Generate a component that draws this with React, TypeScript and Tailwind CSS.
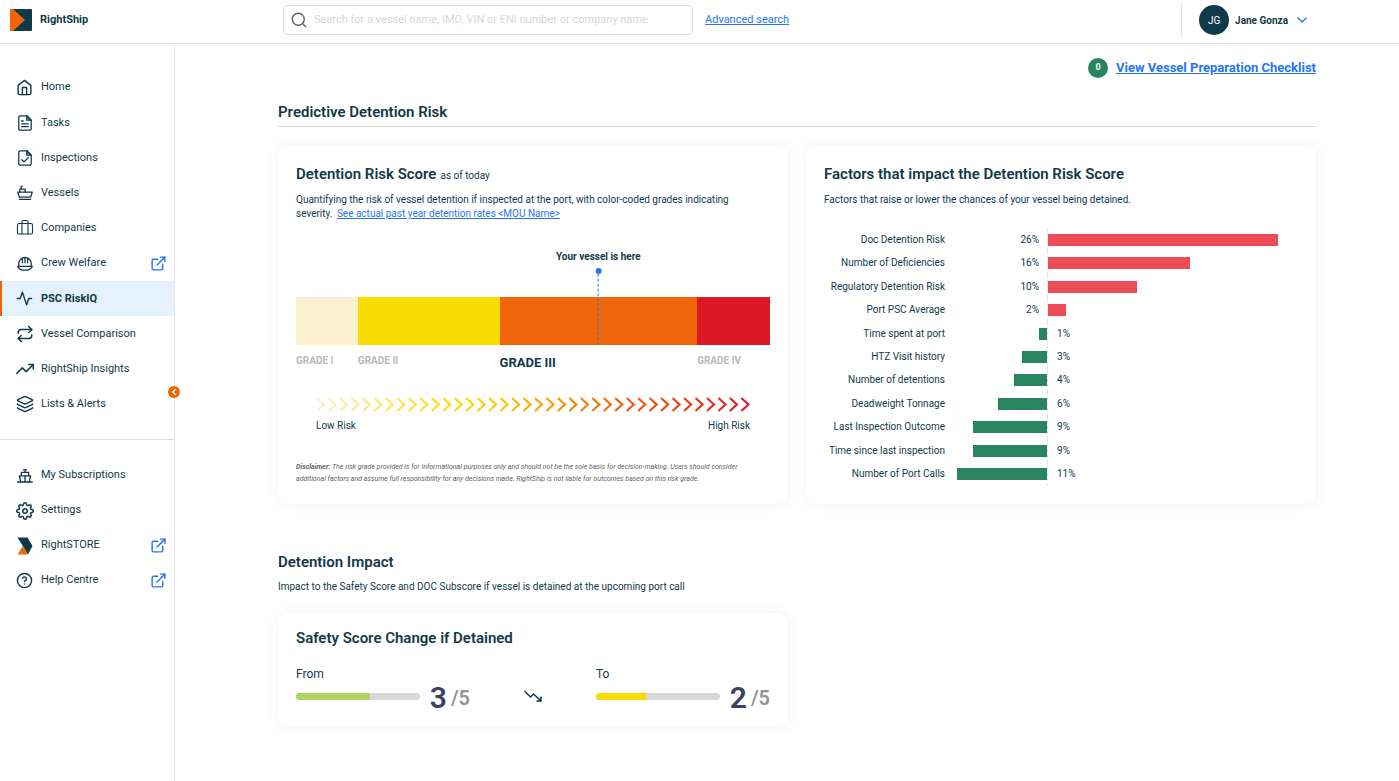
import type { ReactNode } from 'react';
import clsx from 'clsx';
import { Briefcase, ChevronDown, ChevronLeft, Layers, Repeat, Search } from 'lucide-react';
import { FiActivity, FiExternalLink, FiHelpCircle, FiHome, FiSettings, FiTrendingUp } from 'react-icons/fi';

interface NavItem {
  label: string;
  icon: ReactNode;
  external?: boolean;
  active?: boolean;
}

interface Factor {
  label: string;
  value: number;
  raisesRisk: boolean;
}

function LineIcon({ children }: { children: ReactNode }) {
  return (
    <svg
      viewBox="0 0 16 16"
      className="size-4"
      fill="none"
      stroke="currentColor"
      strokeWidth="1.3"
      strokeLinecap="round"
      strokeLinejoin="round"
      aria-hidden="true"
    >
      {children}
    </svg>
  );
}

function TasksIcon() {
  return (
    <LineIcon>
      <path d="M9.8.8H3.2a1.4 1.4 0 0 0-1.4 1.4v11.6a1.4 1.4 0 0 0 1.4 1.4h9.6a1.4 1.4 0 0 0 1.4-1.4V5.2z" />
      <path d="M9.8.8v4.4h4.4z" fill="currentColor" fillOpacity="0.35" />
      <path d="M4.6 6h1.6M4.6 8.8h6.8M4.6 11.6h6.8" />
    </LineIcon>
  );
}

function InspectionsIcon() {
  return (
    <LineIcon>
      <path d="M9.8.8H3.2a1.4 1.4 0 0 0-1.4 1.4v11.6a1.4 1.4 0 0 0 1.4 1.4h9.6a1.4 1.4 0 0 0 1.4-1.4V5.2z" />
      <path d="M9.8.8v4.4h4.4z" fill="currentColor" fillOpacity="0.35" />
      <path d="m4.9 9.8 2.1 2.1 4.2-4.2" />
    </LineIcon>
  );
}

function VesselIcon() {
  return (
    <LineIcon>
      <path d="M.8 7.2h14.4l-1.6 5H2.4z" />
      <path d="M2.8 7V4.2h5.4V7M4.2 4V1.4h1" />
      <path d="M2.4 14.4h11.2" />
    </LineIcon>
  );
}

function HelmetIcon() {
  return (
    <LineIcon>
      <path d="M1.8 10V7.6a6.2 6.2 0 0 1 12.4 0V10" />
      <path d="M.7 10.4h14.6c-1.1 2.5-3.6 3.8-7.3 3.8S1.8 12.9.7 10.4z" />
      <path d="M5.4 2.6v4.2M8 1.6v5.2M10.6 2.6v4.2" />
    </LineIcon>
  );
}

function SubscriptionsIcon() {
  return (
    <LineIcon>
      <path d="M.7 14h14.6M6.4 1.8h3.2M8 1.8v2.6M8 8v6" />
      <path d="M4.4 7.6V4.4h7.2v3.2" />
      <path d="M3.7 13.8 2.4 7.8h11.2l-1.3 6" />
    </LineIcon>
  );
}

function StoreIcon() {
  return (
    <svg viewBox="0 0 16 18" className="h-[18px] w-4" aria-hidden="true">
      <path d="M.5.5h10l5 8.5-4.5 8.5L5.8 9z" fill="#10394a" />
      <path d="M.7 17.5 5.8 9l5.2 8.5z" fill="#f06408" />
    </svg>
  );
}

const mainNav: NavItem[] = [
  { label: 'Home', icon: <FiHome size={17} /> },
  { label: 'Tasks', icon: <TasksIcon /> },
  { label: 'Inspections', icon: <InspectionsIcon /> },
  { label: 'Vessels', icon: <VesselIcon /> },
  { label: 'Companies', icon: <Briefcase size={18} strokeWidth={1.5} /> },
  { label: 'Crew Welfare', icon: <HelmetIcon />, external: true },
  { label: 'PSC RiskIQ', icon: <FiActivity size={17} />, active: true },
  { label: 'Vessel Comparison', icon: <Repeat size={18} /> },
  { label: 'RightShip Insights', icon: <FiTrendingUp size={18} /> },
  { label: 'Lists & Alerts', icon: <Layers size={18} /> },
];

const secondaryNav: NavItem[] = [
  { label: 'My Subscriptions', icon: <SubscriptionsIcon /> },
  { label: 'Settings', icon: <FiSettings size={18} /> },
  { label: 'RightSTORE', icon: <StoreIcon />, external: true },
  { label: 'Help Centre', icon: <FiHelpCircle size={17} />, external: true },
];

const factors: Factor[] = [
  { label: 'Doc Detention Risk', value: 26, raisesRisk: true },
  { label: 'Number of Deficiencies', value: 16, raisesRisk: true },
  { label: 'Regulatory Detention Risk', value: 10, raisesRisk: true },
  { label: 'Port PSC Average', value: 2, raisesRisk: true },
  { label: 'Time spent at port', value: 1, raisesRisk: false },
  { label: 'HTZ Visit history', value: 3, raisesRisk: false },
  { label: 'Number of detentions', value: 4, raisesRisk: false },
  { label: 'Deadweight Tonnage', value: 6, raisesRisk: false },
  { label: 'Last Inspection Outcome', value: 9, raisesRisk: false },
  { label: 'Time since last inspection', value: 9, raisesRisk: false },
  { label: 'Number of Port Calls', value: 11, raisesRisk: false },
];

// share of each half of the chart taken by one percent
const RAISE_SCALE = 3.54;
const LOWER_SCALE = 8.04;

function Logo() {
  return (
    <svg viewBox="0 0 22 22" className="size-[22px]" aria-hidden="true">
      <rect width="22" height="22" rx="1" fill="#10394a" />
      <path d="M1 0h2l12 11L3 22H1a1 1 0 0 1-1-1V1a1 1 0 0 1 1-1z" fill="#f06408" />
    </svg>
  );
}

function Header() {
  return (
    <header className="flex h-11 items-center border-b border-[#d9dbdc] pb-[3px]">
      <a
        href="#"
        className="flex w-[283px] shrink-0 items-center gap-2 pl-2.5 text-[11px] font-bold"
      >
        <Logo />
        RightShip
      </a>
      <label className="flex h-[30px] w-[410px] items-center gap-1.5 rounded border border-[#dfe0e1] px-1.5">
        <Search size={18} strokeWidth={1.75} className="shrink-0 text-[#5d5f61]" />
        <input
          type="search"
          aria-label="Search vessels"
          placeholder="Search for a vessel name, IMO, VIN or ENI number or company name"
          className="w-full text-[11px] outline-none placeholder:text-[#d6d7d8]"
        />
      </label>
      <a href="#" className="ml-3 text-[11px] text-[#2574f5] underline">
        Advanced search
      </a>
      <div className="mr-[89px] ml-auto flex h-9 items-center border-l border-[#e3e4e5] pl-[17px]">
        <button type="button" className="flex items-center text-[10px] font-bold">
          <span className="mr-1.5 flex size-[30px] items-center justify-center rounded-full bg-[#10394a] font-normal text-white">
            JG
          </span>
          Jane Gonza
          <ChevronDown size={16} className="ml-1.5 text-[#2574f5]" />
        </button>
      </div>
    </header>
  );
}

function NavLink({ item }: { item: NavItem }) {
  return (
    <a
      href="#"
      aria-current={item.active ? 'page' : undefined}
      className={clsx(
        'flex h-full items-center border-l-2 pr-[7px] pl-3.5 text-[11px]',
        item.active ? 'border-[#f06408] bg-[#e5f2fe] font-bold' : 'border-transparent'
      )}
    >
      <span className="mr-2 flex w-[17px] justify-center *:shrink-0">{item.icon}</span>
      {item.label}
      {item.external && <FiExternalLink size={17} className="ml-auto text-[#2574f5]" />}
    </a>
  );
}

function Sidebar() {
  return (
    <nav className="relative w-[175px] shrink-0 border-r border-[#e6e7e8] pt-[26px]">
      <ul className="grid h-[352px] auto-rows-fr">
        {mainNav.map(item => (
          <li key={item.label}>
            <NavLink item={item} />
          </li>
        ))}
      </ul>
      <ul className="mt-[17px] grid h-[159px] auto-rows-fr border-t border-[#dcdddf] pt-[18px]">
        {secondaryNav.map(item => (
          <li key={item.label}>
            <NavLink item={item} />
          </li>
        ))}
      </ul>
      <button
        type="button"
        aria-label="Collapse menu"
        className="absolute top-[342px] -right-[6px] flex size-3 items-center justify-center rounded-full bg-[#f06408] text-white"
      >
        <ChevronLeft size={10} strokeWidth={3} />
      </button>
    </nav>
  );
}

interface CardProps {
  title: string;
  note?: string;
  compact?: boolean;
  children: ReactNode;
}

function Card({ title, note, compact, children }: CardProps) {
  return (
    <section
      className={clsx(
        'rounded-xl bg-white px-[18px] shadow-[0_0_14px_rgba(16,57,74,0.07)]',
        compact ? 'pt-3.5 pb-[17px]' : 'py-[18px]'
      )}
    >
      <h3 className="flex items-baseline gap-1 text-[15px] leading-[22px] font-semibold">
        {title}
        {note && <span className="text-[10px] leading-none font-normal">{note}</span>}
      </h3>
      {children}
    </section>
  );
}

function RiskArrows() {
  return (
    <svg viewBox="0 0 434 15" className="w-full" fill="none" aria-hidden="true">
      <defs>
        <linearGradient id="risk" gradientUnits="userSpaceOnUse" x1="0" y1="0" x2="434" y2="0">
          <stop offset="0" stopColor="#fcf0cf" />
          <stop offset="0.32" stopColor="#fadd00" />
          <stop offset="0.4" stopColor="#fbd000" />
          <stop offset="0.7" stopColor="#ef650a" />
          <stop offset="1" stopColor="#dd1928" />
        </linearGradient>
      </defs>
      <path
        d={Array.from({ length: 38 }, (_, i) => `M${1 + i * 11.47} 1l7 6.5-7 6.5`).join('')}
        stroke="url(#risk)"
        strokeWidth="2.2"
      />
    </svg>
  );
}

function RiskScoreCard() {
  return (
    <Card title="Detention Risk Score" note="as of today">
      <p className="mt-2 text-[10px] leading-[14px]">
        Quantifying the risk of vessel detention if inspected at the port, with color-coded grades
        indicating
        <br />
        severity.{' '}
        <a href="#" className="ml-0.5 text-[#2574f5] underline">
          See actual past year detention rates &lt;MOU Name&gt;
        </a>
      </p>
      <div className="mt-[76px] grid h-12 grid-cols-[62fr_142fr_198fr_73fr]">
        <div className="bg-[#fcf0cf]" />
        <div className="bg-[#fadd00]" />
        <div className="relative bg-[#ef650a]">
          <div className="absolute bottom-0 left-1/2 flex -translate-x-1/2 flex-col items-center">
            <span className="text-[10px] leading-4 font-bold whitespace-nowrap">
              Your vessel is here
            </span>
            <span className="mt-[3px] size-1.5 rounded-full bg-[#2574f5]" />
            <span className="h-[71px] border-l border-dashed border-[#2574f5]" />
          </div>
        </div>
        <div className="bg-[#dd1928]" />
      </div>
      <div className="mt-2 grid grid-cols-[62fr_142fr_198fr_73fr] text-[10px] leading-4 font-bold text-[#b7b9ba]">
        <span>GRADE I</span>
        <span>GRADE II</span>
        <span className="text-[13px] leading-5 text-[#10394a]">GRADE III</span>
        <span>GRADE IV</span>
      </div>
      <div className="mt-6 px-5">
        <RiskArrows />
        <div className="mt-[7px] flex justify-between text-[10px] leading-[14px]">
          <span>Low Risk</span>
          <span>High Risk</span>
        </div>
      </div>
      <p className="mt-7 pr-2 text-[7px] leading-3 text-[#5d5f61] italic">
        <b>Disclaimer:</b> The risk grade provided is for informational purposes only and should not
        be the sole basis for decision-making. Users should consider additional factors and assume
        full responsibility for any decisions made. RightShip is not liable for outcomes based on
        this risk grade.
      </p>
    </Card>
  );
}

function FactorRow({ factor }: { factor: Factor }) {
  const { label, value, raisesRisk } = factor;

  return (
    <li className="grid grid-cols-[121px_103px_1fr] items-center">
      <span className="text-right whitespace-nowrap">{label}</span>
      <span className="flex h-full items-center justify-end border-r border-dashed border-[#dfe0e1]">
        {raisesRisk ? (
          <span className="pr-2">{value}%</span>
        ) : (
          <span className="h-3 bg-[#29855f]" style={{ width: `${value * LOWER_SCALE}%` }} />
        )}
      </span>
      <span className="flex items-center">
        {raisesRisk ? (
          <span className="h-3 bg-[#ec4c56]" style={{ width: `${value * RAISE_SCALE}%` }} />
        ) : (
          <span className="pl-[9px]">{value}%</span>
        )}
      </span>
    </li>
  );
}

function FactorsCard() {
  return (
    <Card title="Factors that impact the Detention Risk Score">
      <p className="mt-2 text-[10px] leading-[14px]">
        Factors that raise or lower the chances of your vessel being detained.
      </p>
      <ul className="mt-[21px] grid h-[258px] auto-rows-fr text-[10px] leading-[14px]">
        {factors.map(factor => (
          <FactorRow key={factor.label} factor={factor} />
        ))}
      </ul>
    </Card>
  );
}

function Score({ label, score, color }: { label: string; score: number; color: string }) {
  return (
    <div>
      <div className="text-xs leading-4">{label}</div>
      <div className="flex h-7 items-center">
        <div className="h-[7px] flex-1 overflow-hidden rounded-full bg-[#d8d8d8]">
          <div className={clsx('h-full', color)} style={{ width: `${(score / 5) * 100}%` }} />
        </div>
        <div className="ml-2.5 flex items-center gap-1 pt-1 font-semibold">
          <span className="text-[30px] leading-7 text-[#3b4163]">{score}</span>
          <span className="text-xl leading-7 text-[#919396]">/5</span>
        </div>
      </div>
    </div>
  );
}

function ScoreChangeCard() {
  return (
    <Card title="Safety Score Change if Detained" compact>
      <div className="mt-[17px] grid grid-cols-[1fr_auto_1fr] gap-[54px]">
        <Score label="From" score={3} color="bg-[#b0d361]" />
        <svg
          viewBox="0 0 18 12"
          className="mb-2 h-3 w-[18px] self-end"
          fill="none"
          stroke="currentColor"
          strokeWidth="1.5"
          aria-hidden="true"
        >
          <path d="m.5 1 6 6 3-3 7.5 7M12.5 11H17V6.5" />
        </svg>
        <Score label="To" score={2} color="bg-[#fadd00]" />
      </div>
    </Card>
  );
}

export default function App() {
  return (
    <div className="flex min-h-screen flex-col bg-white font-[Roboto,sans-serif] text-[#10394a]">
      <Header />
      <div className="flex flex-1">
        <Sidebar />
        <main className="min-w-0 flex-1 pt-3.5 pr-[83px] pb-10 pl-[103px]">
          <div className="flex items-center justify-end gap-2">
            <span className="flex size-5 items-center justify-center rounded-full bg-[#29855f] text-[9px] font-bold text-white">
              0
            </span>
            <a href="#" className="text-[13px] leading-5 font-bold text-[#2574f5] underline">
              View Vessel Preparation Checklist
            </a>
          </div>

          <h2 className="mt-6 border-b border-[#d3d5d6] pb-1 text-[15px] leading-5 font-semibold">
            Predictive Detention Risk
          </h2>
          <div className="mt-[18px] grid grid-cols-2 gap-[18px]">
            <RiskScoreCard />
            <FactorsCard />
          </div>

          <h2 className="mt-12 text-[15px] leading-5 font-semibold">Detention Impact</h2>
          <p className="mt-2 text-[10px] leading-[14px]">
            Impact to the Safety Score and DOC Subscore if vessel is detained at the upcoming port
            call
          </p>
          <div className="mt-[19px] grid grid-cols-2 gap-[18px]">
            <ScoreChangeCard />
          </div>
        </main>
      </div>
    </div>
  );
}
